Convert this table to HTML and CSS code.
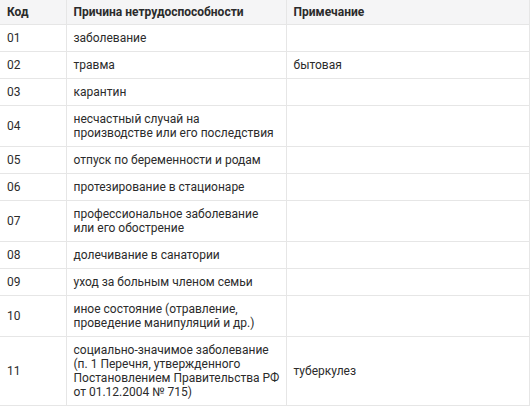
FILE: index.html
```html
<!DOCTYPE html>
<html lang="ru">
<head>
<meta charset="utf-8">
<link rel="stylesheet" href="styles.css">
</head>
<body>
<table class="codes">
  <colgroup>
    <col class="c-code">
    <col class="c-reason">
    <col class="c-note">
  </colgroup>
  <thead>
    <tr><th>Код</th><th>Причина нетрудоспособности</th><th>Примечание</th></tr>
  </thead>
  <tbody>
    <tr><td>01</td><td>заболевание</td><td></td></tr>
    <tr><td>02</td><td>травма</td><td>бытовая</td></tr>
    <tr><td>03</td><td>карантин</td><td></td></tr>
    <tr><td>04</td><td>несчастный случай на<br>производстве или его последствия</td><td></td></tr>
    <tr><td>05</td><td>отпуск по беременности и родам</td><td></td></tr>
    <tr><td>06</td><td>протезирование в стационаре</td><td></td></tr>
    <tr><td>07</td><td>профессиональное заболевание<br>или его обострение</td><td></td></tr>
    <tr><td>08</td><td>долечивание в санатории</td><td></td></tr>
    <tr><td>09</td><td>уход за больным членом семьи</td><td></td></tr>
    <tr><td>10</td><td>иное состояние (отравление,<br>проведение манипуляций и др.)</td><td></td></tr>
    <tr><td>11</td><td>социально-значимое заболевание<br>(п. 1 Перечня, утвержденного<br>Постановлением Правительства РФ<br>от 01.12.2004 № 715)</td><td>туберкулез</td></tr>
  </tbody>
</table>
</body>
</html>
```
FILE: styles.css
```css
html, body {
  margin: 0;
  padding: 0;
  background: #ffffff;
}
.codes {
  border-collapse: collapse;
  width: 529px;
  table-layout: fixed;
  font-family: Roboto, "Liberation Sans", sans-serif;
  font-size: 12px;
  line-height: 14px;
  color: #2b2b2b;
}
.c-code { width: 66px; }
.c-reason { width: 220px; }
.c-note { width: 243px; }
.codes th,
.codes td {
  border: 1px solid #e6e6e6;
  text-align: left;
  vertical-align: middle;
  padding: 6px 1px 6px 7px;
  white-space: nowrap;
}
.codes th {
  background: #f5f5f6;
  font-weight: 700;
  padding: 5px 1px 5px 7px;
  border-top: none;
}
.codes tr > :first-child { border-left: none; }
```
